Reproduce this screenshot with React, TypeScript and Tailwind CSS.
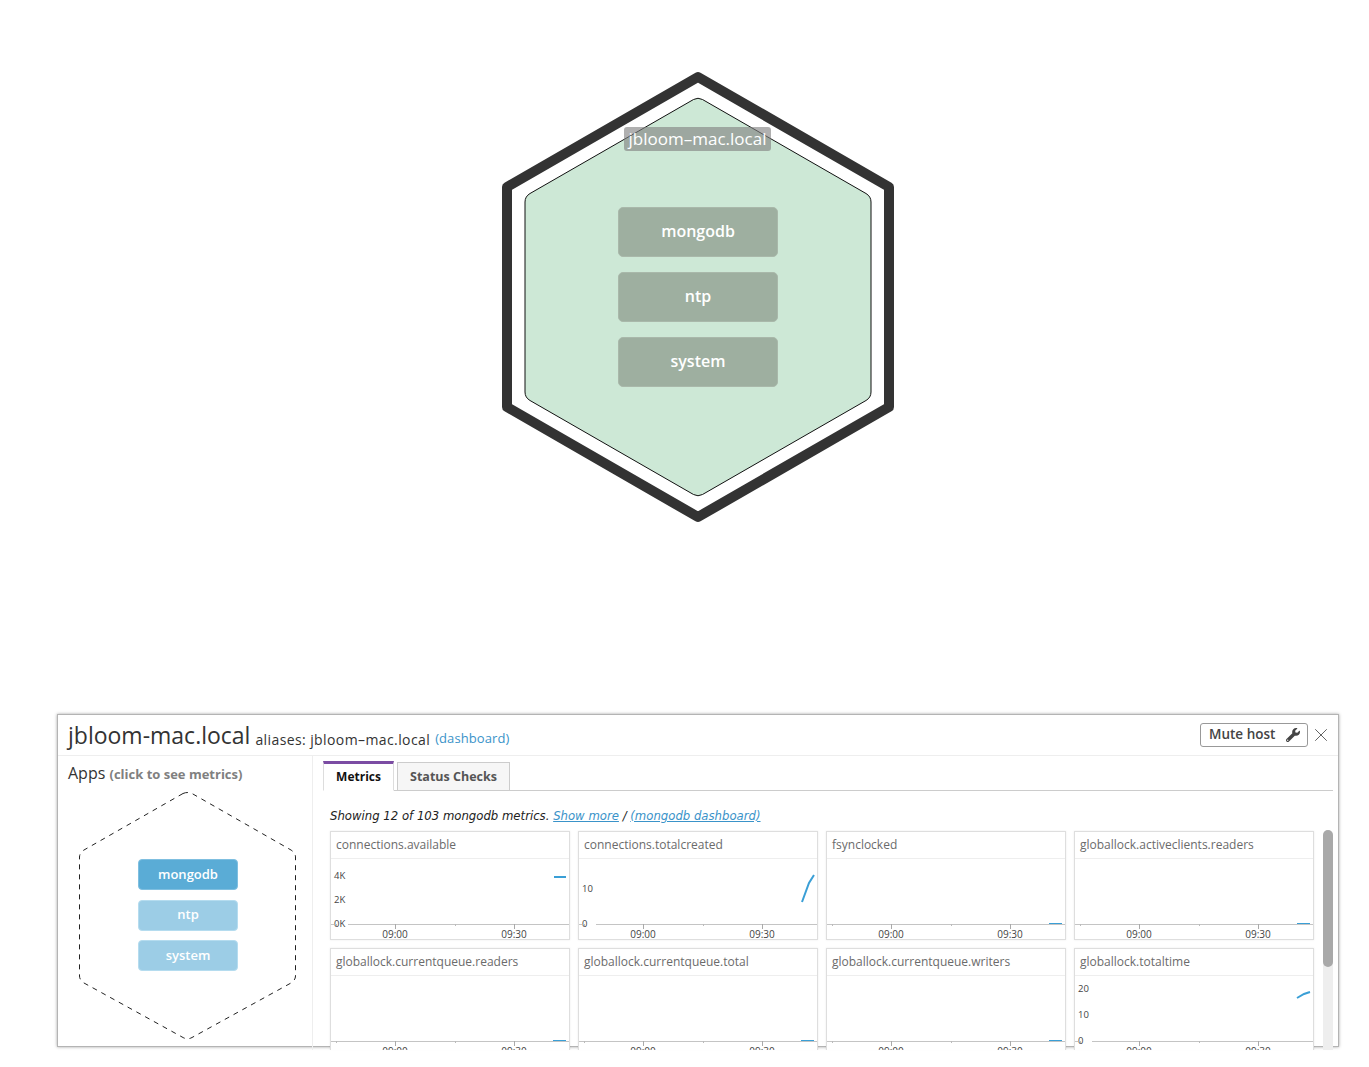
import React from 'react';
import { X } from 'lucide-react';
import { FaWrench } from 'react-icons/fa';

const BLUE = '#3a9fd6';

type Metric = {
  name: string;
  yLabels?: { text: string; y: number }[];
  line: string;
};

const flatLine = 'M223 92.5 L236 92.5';

const metrics: Metric[] = [
  {
    name: 'connections.available',
    yLabels: [
      { text: '4K', y: 44 },
      { text: '2K', y: 68 },
      { text: '0K', y: 92.5 },
    ],
    line: 'M224 46 L236 46',
  },
  {
    name: 'connections.totalcreated',
    yLabels: [
      { text: '10', y: 57 },
      { text: '0', y: 92.5 },
    ],
    line: 'M224 71 L231 52 L236 44',
  },
  { name: 'fsynclocked', line: flatLine },
  { name: 'globallock.activeclients.readers', line: flatLine },
  { name: 'globallock.currentqueue.readers', line: flatLine },
  { name: 'globallock.currentqueue.total', line: flatLine },
  { name: 'globallock.currentqueue.writers', line: flatLine },
  {
    name: 'globallock.totaltime',
    yLabels: [
      { text: '20', y: 40 },
      { text: '10', y: 66 },
      { text: '0', y: 92.5 },
    ],
    line: 'M223 50 L230 46 L236 44',
  },
];

function MetricCard({ metric }: { metric: Metric }) {
  const labels = metric.yLabels ?? [];
  const hasZero = labels.length > 0;
  return (
    <div className="relative h-[109px] w-[240px] border border-[#dedede] bg-white shadow-[0_0_2px_rgba(0,0,0,0.08)]">
      <div className="flex h-[27px] items-center border-b border-[#eeeeee] pl-[5px] text-[12px] text-[#6b6b6b]">
        {metric.name}
      </div>
      <svg className="absolute left-0 top-0 overflow-visible" width="238" height="107" viewBox="1 1 238 107">
        <path d={hasZero ? 'M1 93.5 H4 M18 93.5 H239' : 'M1 93.5 H239'} stroke="#c4c4c4" fill="none" />
        <path d="M65.5 93 V98 M184.5 93 V98" stroke="#aaaaaa" fill="none" />
        <path d="M6.5 93 V95 M125.5 93 V95" stroke="#bbbbbb" fill="none" />
        {labels.map((l) => (
          <text key={l.text} x="4" y={l.y + 3.5} fontSize="9.5" fill="#444444">
            {l.text}
          </text>
        ))}
        <text x="65" y="106.5" fontSize="10" fill="#444444" textAnchor="middle">
          09:00
        </text>
        <text x="184" y="106.5" fontSize="10" fill="#444444" textAnchor="middle">
          09:30
        </text>
        <path d={metric.line} stroke={BLUE} strokeWidth={metric.line === flatLine ? 1 : 2} fill="none" />
      </svg>
    </div>
  );
}

function HostMap() {
  return (
    <div className="relative h-[714px]">
      <svg className="absolute left-0 top-0" width="1369" height="714">
        <path d="M698 77 L889 187 V407 L698 517 L507 407 V187 Z" fill="none" stroke="#333333" strokeWidth="10" strokeLinejoin="round" />
        <path
          d="M693.5 99.5 Q698 97 702.5 99.5 L866 193.5 Q871 196.5 871 202 V392 Q871 397.5 866 400.5 L702.5 494.5 Q698 497 693.5 494.5 L530 400.5 Q525 397.5 525 392 V202 Q525 196.5 530 193.5 Z"
          fill="#cde8d6"
          stroke="#111111"
          strokeWidth="1"
        />
      </svg>
      <div className="absolute left-[624px] top-[127px] flex h-[24px] w-[147px] items-center justify-center rounded-[3px] bg-[rgba(128,128,128,0.62)] pb-[1px] text-[17px] font-medium text-white">
        jbloom–mac.local
      </div>
      <div className="absolute left-[618px] top-[207px] flex w-[160px] flex-col gap-[15px]">
        {['mongodb', 'ntp', 'system'].map((app) => (
          <div
            key={app}
            className="flex h-[50px] items-center justify-center rounded-[5px] border border-[#a9b8aa] bg-[#9eafa0] pb-[2px] text-[16px] font-semibold text-white"
          >
            {app}
          </div>
        ))}
      </div>
    </div>
  );
}

function AppsColumn() {
  return (
    <div className="relative w-[255px] shrink-0 border-r border-[#eeeeee]">
      <div className="pl-[10px] pt-[5px] text-[16px] leading-[24px] text-[#333333]">
        Apps <span className="text-[13px] font-bold text-[#808080]">(click to see metrics)</span>
      </div>
      <svg className="absolute left-0 top-0" width="255" height="291">
        <path
          d="M125 37.5 Q129.5 35.5 134 37.5 L233 94 Q237.5 97 237.5 101 V220 Q237.5 224 233 227 L134 281.5 Q129.5 284 125 281.5 L26 227 Q21.5 224 21.5 220 V101 Q21.5 97 26 94 Z"
          fill="none"
          stroke="#222222"
          strokeDasharray="5 5"
        />
      </svg>
      <div className="absolute left-[80px] top-[103px] flex w-[100px] flex-col gap-[9.5px]">
        <div className="flex h-[31px] items-center justify-center rounded-[4px] border border-[#7fbfe0] bg-[#5aacd6] text-[13px] font-semibold text-white">
          mongodb
        </div>
        <div className="flex h-[31px] items-center justify-center rounded-[4px] border border-[#b5dcef] bg-[#9ccde6] text-[13px] font-semibold text-white">
          ntp
        </div>
        <div className="flex h-[31px] items-center justify-center rounded-[4px] border border-[#b5dcef] bg-[#9ccde6] text-[13px] font-semibold text-white">
          system
        </div>
      </div>
    </div>
  );
}

export default function App() {
  return (
    <div className="h-[1067px] w-[1369px] overflow-hidden bg-white font-['Open_Sans',sans-serif]">
      <HostMap />

      {/* Host detail panel */}
      <div className="ml-[57px] h-[333px] w-[1282px] border border-[#b4b4b4] bg-white shadow-[0_0_3px_rgba(0,0,0,0.35)]">
        <div className="flex h-[41px] items-center border-b border-[#eeeeee] pl-[10px] pr-[6px]">
          <span className="text-[23px] leading-[32px] text-[#333333]">jbloom-mac.local</span>
          <span className="ml-[5px] mt-[8px] text-[14px] tracking-[0.4px] text-[#333333]">aliases: jbloom–mac.local</span>
          <a className="ml-[5px] mt-[8px] text-[13px] tracking-[0.1px] text-[#3a93c9]">(dashboard)</a>
          <button className="ml-auto flex h-[24px] w-[108px] items-center justify-between rounded-[3px] border border-[#999999] pb-[1px] pl-[8px] pr-[7px] text-[13.5px] font-semibold text-[#444444]">
            Mute host
            <FaWrench className="h-[14px] w-[14px] text-[#444444]" />
          </button>
          <X className="ml-[2px] h-[22px] w-[22px] text-[#555555]" strokeWidth={1} />
        </div>

        <div className="flex">
          <AppsColumn />
          <div className="min-w-0 flex-1 pl-[10px] pr-[5px]">
            <div className="flex h-[35px] items-end border-b border-[#cccccc] pt-[5px]">
              <div className="flex h-[30px] w-[71px] -mb-px items-center justify-center border-x border-b border-x-[#dddddd] border-b-white border-t-[3px] border-t-[#7b4ca3] bg-white text-[12px] font-bold text-[#111111]">
                Metrics
              </div>
              <div className="ml-[3px] flex h-[29px] w-[113px] -mb-px items-center justify-center border border-[#cccccc] bg-[#f6f6f6] pt-[2px] text-[12.5px] font-bold text-[#555555]">
                Status Checks
              </div>
            </div>
            <p className="h-[39px] pl-[7px] pt-[16px] font-['DejaVu_Sans',sans-serif] text-[11.7px] italic leading-[18px] text-[#222222]">
              Showing 12 of 103 mongodb metrics.{' '}
              <a className="text-[#3a93c9] underline">Show more</a> /{' '}
              <a className="text-[#3a93c9] underline">(mongodb dashboard)</a>
            </p>
            <div className="relative flex h-[220px] overflow-hidden pl-[7px]">
              <div className="grid h-fit grid-cols-[repeat(4,240px)] gap-[8px] pt-px">
                {metrics.map((m) => (
                  <MetricCard key={m.name} metric={m} />
                ))}
              </div>
              <div className="absolute right-0 top-0 h-full w-[10px] rounded-t-[5px] bg-[#eeeeee]">
                <div className="h-[137px] rounded-[5px] bg-[#a9a9a9]" />
              </div>
            </div>
          </div>
        </div>
      </div>
    </div>
  );
}
